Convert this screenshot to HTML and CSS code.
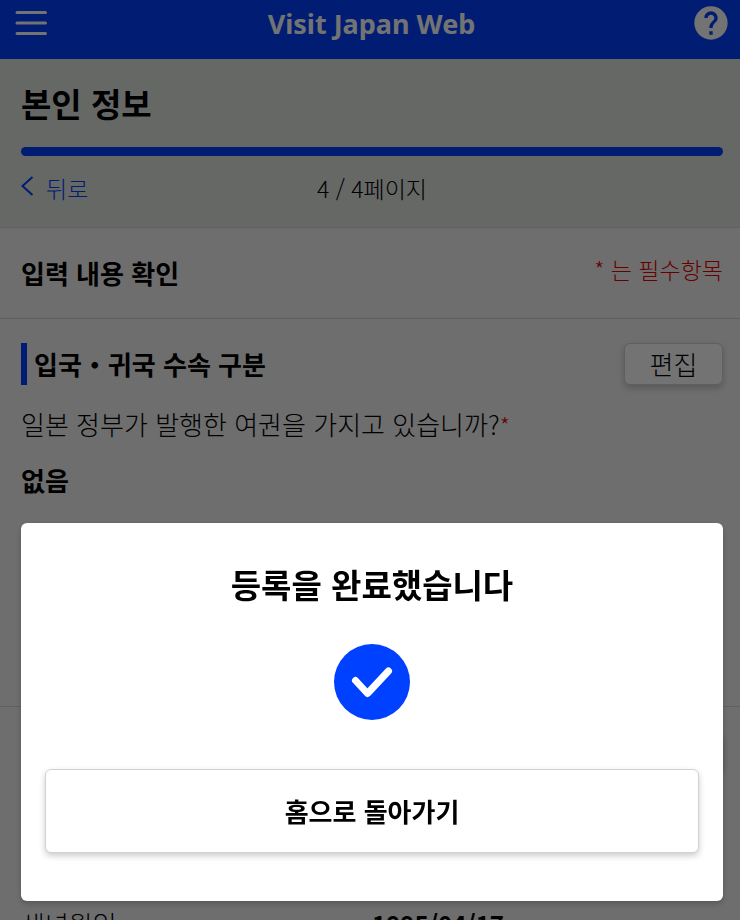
FILE: index.html
```html
<!DOCTYPE html>
<html lang="ko">
<head>
<meta charset="utf-8">
<meta name="viewport" content="width=device-width, initial-scale=1">
<title>Visit Japan Web</title>
<link rel="stylesheet" href="styles.css">
</head>
<body>
<div class="page">
  <header class="app-bar">
    <button class="icon-button" type="button" aria-label="메뉴">
      <svg viewBox="0 0 40 40" width="40" height="40" fill="none" stroke="currentColor" stroke-width="3" stroke-linecap="round">
        <path d="M5 9.500H33.500M5 20H33.500M5 30.500H33.500"/>
      </svg>
    </button>
    <div class="brand">Visit Japan Web</div>
    <button class="icon-button icon-button-end" type="button" aria-label="도움말">
      <svg viewBox="0 0 24 24" width="40" height="40" fill="currentColor">
        <path d="M12 2C6.480 2 2 6.480 2 12s4.480 10 10 10 10-4.480 10-10S17.520 2 12 2zm1 17h-2v-2h2v2zm2.070-7.750l-.9.920C13.450 12.900 13 13.500 13 15h-2v-.5c0-1.100.45-2.100 1.170-2.830l1.240-1.260c.37-.36.59-.86.59-1.410 0-1.100-.9-2-2-2s-2 .9-2 2H8c0-2.210 1.790-4 4-4s4 1.790 4 4c0 .88-.36 1.680-.93 2.250z"/>
      </svg>
    </button>
  </header>

  <section class="progress-panel">
    <h1 class="page-title">본인 정보</h1>
    <div class="progress-bar"></div>
    <nav class="pager">
      <a class="back" href="#">
        <svg viewBox="0 0 13 20" width="13" height="20" fill="none" stroke="currentColor" stroke-width="2">
          <path d="M11.500 1L1.500 10L11.500 19"/>
        </svg>
        <span>뒤로</span>
      </a>
      <span>4 / 4페이지</span>
    </nav>
  </section>

  <main>
    <section class="confirm-bar">
      <h2 class="heading">입력 내용 확인</h2>
      <span class="required-note">* 는 필수항목</span>
    </section>

    <section class="block block-entry">
      <div class="block-head">
        <h2 class="heading marked">입국・귀국 수속 구분</h2>
        <button class="edit" type="button">편집</button>
      </div>
      <p class="question">일본 정부가 발행한 여권을 가지고 있습니까?<span class="star">*</span></p>
      <p class="answer">없음</p>
    </section>

    <section class="block">
      <div class="block-head block-head-end">
        <button class="edit" type="button">편집</button>
      </div>
      <dl class="facts">
        <dt>생년월일</dt>
        <dd>1995/04/17</dd>
      </dl>
    </section>
  </main>
</div>

<div class="overlay">
  <div class="dialog" role="dialog" aria-modal="true" aria-labelledby="dialog-title">
    <h2 class="dialog-title" id="dialog-title">등록을 완료했습니다</h2>
    <svg class="done" viewBox="0 0 76 76" width="76" height="76">
      <circle cx="38" cy="38" r="38" fill="#0041ff"/>
      <path d="M21.500 36.500L33.500 49.500L54.500 27" fill="none" stroke="#fff" stroke-width="7" stroke-linecap="round" stroke-linejoin="round"/>
    </svg>
    <button class="home" type="button">홈으로 돌아가기</button>
  </div>
</div>
</body>
</html>
```
FILE: styles.css
```css
* {
  box-sizing: border-box;
}

body {
  margin: 0;
  overflow: hidden;
  background: #f3f3f3;
  color: #000;
  font-family: "Noto Sans CJK KR", sans-serif;
  font-size: 26px;
  line-height: 40px;
}

h1, h2, p, dl, dd {
  margin: 0;
}

button {
  font-family: inherit;
  color: inherit;
  cursor: pointer;
}

.page {
  height: 100vh;
  overflow: hidden;
}

.app-bar {
  display: grid;
  grid-template-columns: 1fr auto 1fr;
  align-items: start;
  padding: 3px 9px 14px 12px;
  background: #0041ff;
  color: #fff;
}

.icon-button {
  display: flex;
  width: 40px;
  padding: 0;
  border: 0;
  background: none;
}

.icon-button-end {
  justify-self: end;
}

.brand {
  font-family: "Noto Sans", sans-serif;
  font-size: 27px;
  font-weight: 700;
  line-height: 42px;
}

.progress-panel {
  padding: 24px 17px 19px 21px;
  border-bottom: 1px solid #d2d4d2;
  background: #e2e6e3;
}

.page-title {
  font-size: 33px;
  line-height: 40px;
}

.progress-bar {
  height: 9px;
  margin-top: 24px;
  border-radius: 5px;
  background: #0041ff;
}

.pager {
  display: grid;
  grid-template-columns: 1fr auto 1fr;
  margin-top: 12px;
  font-size: 23px;
  font-weight: 300;
}

.back {
  display: flex;
  gap: 12px;
  color: #0041ff;
  text-decoration: none;
}

.back svg {
  margin-top: 8px;
}

.confirm-bar {
  display: flex;
  justify-content: space-between;
  padding: 25px 17px 25px 21px;
  border-bottom: 1px solid #d2d2d2;
}

.heading {
  font-size: 26px;
  line-height: 40px;
}

.required-note {
  color: #e60000;
  font-size: 23px;
  font-weight: 300;
  line-height: 32px;
}

.block {
  padding: 24px 17px 24px 21px;
}

.block-entry {
  min-height: 388px;
  border-bottom: 1px solid #d2d2d2;
}

.block-head {
  display: flex;
  justify-content: space-between;
  align-items: center;
}

.block-head-end {
  justify-content: flex-end;
}

.marked {
  padding-left: 7px;
  border-left: 6px solid #0041ff;
  line-height: 42px;
}

.edit {
  width: 99px;
  height: 42px;
  padding: 0;
  border: 1px solid #d2d2d2;
  border-radius: 6px;
  background: #fff;
  box-shadow: 0 3px 6px rgba(0, 0, 0, 0.2);
  font-size: 26px;
  font-weight: 300;
  line-height: 40px;
}

.question {
  margin-top: 19px;
  font-weight: 300;
}

.star {
  color: #e60000;
  font-size: 23px;
}

.answer {
  margin-top: 15px;
  font-weight: 700;
}

.facts {
  display: grid;
  grid-template-columns: 1fr 1fr;
  margin-top: 131px;
}

.facts dt {
  font-weight: 300;
}

.facts dd {
  font-size: 24px;
  font-weight: 700;
}

.overlay {
  position: fixed;
  inset: 0;
  display: flex;
  align-items: flex-end;
  padding: 19px 17px 19px 21px;
  background: rgba(0, 0, 0, 0.55);
}

.dialog {
  display: flex;
  flex: 1;
  flex-direction: column;
  align-items: center;
  padding: 41px 24px 48px;
  border-radius: 6px;
  background: #fff;
  box-shadow: 0 3px 6px rgba(0, 0, 0, 0.2);
}

.dialog-title {
  font-size: 33px;
  line-height: 40px;
}

.done {
  margin: 40px 0 49px;
}

.home {
  width: 100%;
  padding: 21px 0;
  border: 1px solid #d2d2d2;
  border-radius: 6px;
  background: #fff;
  box-shadow: 0 3px 6px rgba(0, 0, 0, 0.2);
  font-size: 26px;
  font-weight: 700;
  line-height: 40px;
}
```
